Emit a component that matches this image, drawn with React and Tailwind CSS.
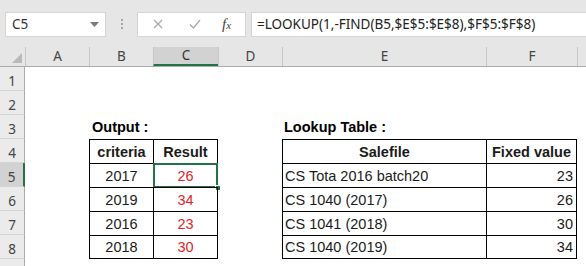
import React from 'react';

const cols = [
  { key: 'A', w: 'w-[64px]' },
  { key: 'B', w: 'w-[64px]' },
  { key: 'C', w: 'w-[65px]' },
  { key: 'D', w: 'w-[64px]' },
  { key: 'E', w: 'w-[204px]' },
  { key: 'F', w: 'w-[91px]' },
];

const lookup = [
  ['CS Tota 2016 batch20', 23],
  ['CS 1040 (2017)', 26],
  ['CS 1041 (2018)', 30],
  ['CS 1040 (2019)', 34],
];

const output = [
  [2017, 26],
  [2019, 34],
  [2016, 23],
  [2018, 30],
];

const ui = "font-['Noto_Sans','Open_Sans',sans-serif]";

function Cell({ w, className = '', children }) {
  return (
    <div className={`${w} h-full shrink-0 flex items-center pt-[2px] whitespace-nowrap ${className}`}>
      {children}
    </div>
  );
}

function Row({ n, children, selected }) {
  return (
    <div className="flex h-[24px] shrink-0">
      <div
        className={`w-[25px] shrink-0 h-full flex items-center justify-center pt-[5px] text-[13.5px] text-[#444] border-b border-[#d4d4d4] ${ui} ${
          selected ? 'bg-[#d2d2d2] border-r-2 border-r-[#217346]' : 'bg-[#ebebeb] border-r border-r-[#ababab]'
        }`}
      >
        {n}
      </div>
      {children}
    </div>
  );
}

export default function App() {
  return (
    <div className="w-[586px] h-[266px] overflow-hidden bg-white flex flex-col font-['Liberation_Sans',Arial,sans-serif] text-[14.5px] text-[#1a1a1a]">
      {/* formula bar */}
      <div className="h-[47px] shrink-0 bg-[#e6e6e6] flex items-center pt-[1px]">
        <div className={`ml-[5px] w-[101px] h-[25px] bg-white border border-[#d4d4d4] flex items-center justify-between pl-[6px] pr-[6px] text-[13.5px] text-[#333] ${ui}`}>
          <span>C5</span>
          <svg width="9" height="5" viewBox="0 0 9 5"><path d="M0 0h9L4.5 5z" fill="#7a7a7a" /></svg>
        </div>
        <div className="w-[31px] flex flex-col items-center gap-[2px]">
          <div className="w-[2px] h-[2px] bg-[#a6a6a6]" />
          <div className="w-[2px] h-[2px] bg-[#a6a6a6]" />
          <div className="w-[2px] h-[2px] bg-[#a6a6a6]" />
        </div>
        <div className="w-[109px] h-[25px] bg-white border border-[#d4d4d4] flex items-center">
          <svg className="ml-[15px]" width="10" height="10" viewBox="0 0 10 10">
            <path d="M1 1l8 8M9 1l-8 8" stroke="#a8a8a8" strokeWidth="1.3" />
          </svg>
          <svg className="ml-[26px]" width="12" height="10" viewBox="0 0 12 10">
            <path d="M1 5.5l3.5 3.5L11 1" stroke="#a8a8a8" strokeWidth="1.3" fill="none" />
          </svg>
          <span className="ml-[21px] font-['Liberation_Serif',serif] italic text-[15px] text-[#444] leading-none">
            f<span className="text-[11px]">x</span>
          </span>
        </div>
        <div className={`ml-[5px] flex-1 h-[25px] bg-white border border-r-0 border-[#d4d4d4] flex items-center pl-[5px] text-[13.5px] text-[#222] whitespace-nowrap ${ui}`}>
          =LOOKUP(1,-FIND(B5,$E$5:$E$8),$F$5:$F$8)
        </div>
      </div>

      {/* column headers */}
      <div className={`flex h-[20px] shrink-0 bg-[#e6e6e6] border-b border-[#ababab] text-[13.5px] text-[#444] ${ui}`}>
        <div className="w-[25px] shrink-0 h-full flex items-end justify-end pr-[3px] pb-[3px]">
          <svg width="10" height="10" viewBox="0 0 10 10"><path d="M10 0v10H0z" fill="#b9b9b9" /></svg>
        </div>
        {cols.map((c) => (
          <div
            key={c.key}
            className={`${c.w} shrink-0 h-full flex items-center justify-center border-l border-[#c6c6c6] ${
              c.key === 'C' ? 'bg-[#d2d2d2] border-b-2 border-b-[#217346] text-[#333]' : ''
            }`}
          >
            {c.key}
          </div>
        ))}
        <div className="flex-1 border-l border-[#c6c6c6]" />
      </div>

      {/* sheet */}
      <Row n={1} />
      <Row n={2} />
      <Row n={3}>
        <Cell w="w-[64px]" />
        <Cell w="w-[64px]" className="pl-[3px] font-bold text-black">Output :</Cell>
        <Cell w="w-[65px]" />
        <Cell w="w-[64px]" />
        <Cell w="w-[204px]" className="pl-[2px] font-bold text-black">Lookup Table :</Cell>
      </Row>
      <Row n={4}>
        <Cell w="w-[64px]" />
        <Cell w="w-[64px]" className="justify-center font-bold border-l border-t border-black">criteria</Cell>
        <Cell w="w-[65px]" className="justify-center font-bold border-l border-r border-t border-black">Result</Cell>
        <Cell w="w-[64px]" />
        <Cell w="w-[204px]" className="justify-center font-bold border-l border-t border-black">Salefile</Cell>
        <Cell w="w-[91px]" className="justify-center font-bold border-l border-r border-t border-black">Fixed value</Cell>
      </Row>
      {output.map(([year, val], i) => (
        <Row key={year} n={i + 5} selected={i === 0}>
          <Cell w="w-[64px]" />
          <Cell w="w-[64px]" className={`justify-center border-l border-t border-black ${i === 3 ? 'border-b' : ''}`}>
            {year}
          </Cell>
          <Cell
            w="w-[65px]"
            className={`relative justify-center text-[#e3222a] border-l border-r border-t border-black ${i === 3 ? 'border-b' : ''}`}
          >
            {val}
            {i === 0 && (
              <>
                <div className="absolute -left-[1px] -top-[1px] -right-[1px] -bottom-[1px] border-2 border-[#217346]" />
                <div className="absolute -right-[4px] -bottom-[4px] w-[6px] h-[6px] bg-[#217346] border border-white" />
              </>
            )}
          </Cell>
          <Cell w="w-[64px]" />
          <Cell w="w-[204px]" className={`pl-[2px] border-l border-t border-black ${i === 3 ? 'border-b' : ''}`}>
            {lookup[i][0]}
          </Cell>
          <Cell w="w-[91px]" className={`justify-end pr-[3px] border-l border-r border-t border-black ${i === 3 ? 'border-b' : ''}`}>
            {lookup[i][1]}
          </Cell>
        </Row>
      ))}
      <Row n="" />
    </div>
  );
}
